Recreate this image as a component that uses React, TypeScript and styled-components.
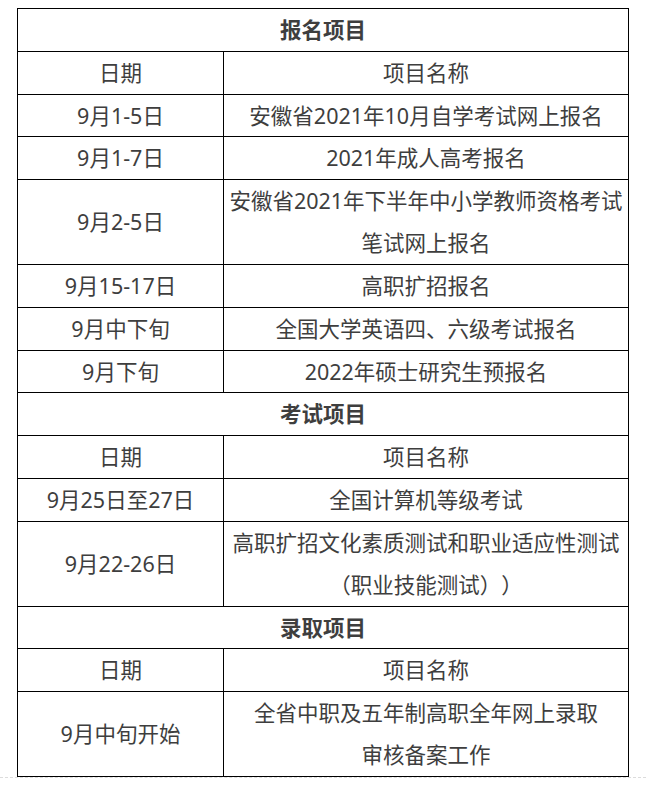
import styled, { createGlobalStyle } from "styled-components";

const GlobalStyle = createGlobalStyle`
  body {
    margin: 0;
    background: #fff;
    font-family: "Noto Sans", "Noto Sans CJK SC", sans-serif;
  }
`;

const Page = styled.div`
  width: 646px;
  box-sizing: border-box;
  padding: 8px 17px 0;
  border-bottom: 1px dashed #dcdcdc;
`;

const Table = styled.table`
  width: 612px;
  border-collapse: collapse;
  table-layout: fixed;
  color: #3e3e3e;
  font-size: 21.5px;
`;

const Cell = styled.td<{ $bold?: boolean }>`
  border: 1px solid #000;
  padding: 0;
  text-align: center;
  vertical-align: middle;
  line-height: 41.83px;
  font-weight: ${(props) => (props.$bold ? 700 : 400)};
  white-space: nowrap;
  text-spacing-trim: space-all;
`;

type Row = { date: string; items: string[] };

type Section = { title: string; rows: Row[] };

const sections: Section[] = [
  {
    title: "报名项目",
    rows: [
      { date: "9月1-5日", items: ["安徽省2021年10月自学考试网上报名"] },
      { date: "9月1-7日", items: ["2021年成人高考报名"] },
      {
        date: "9月2-5日",
        items: ["安徽省2021年下半年中小学教师资格考试", "笔试网上报名"],
      },
      { date: "9月15-17日", items: ["高职扩招报名"] },
      { date: "9月中下旬", items: ["全国大学英语四、六级考试报名"] },
      { date: "9月下旬", items: ["2022年硕士研究生预报名"] },
    ],
  },
  {
    title: "考试项目",
    rows: [
      { date: "9月25日至27日", items: ["全国计算机等级考试"] },
      {
        date: "9月22-26日",
        items: ["高职扩招文化素质测试和职业适应性测试", "（职业技能测试））"],
      },
    ],
  },
  {
    title: "录取项目",
    rows: [
      {
        date: "9月中旬开始",
        items: ["全省中职及五年制高职全年网上录取", "审核备案工作"],
      },
    ],
  },
];

const App = () => {
  return (
    <Page>
      <GlobalStyle />
      <Table>
        <colgroup>
          <col style={{ width: 206 }} />
          <col />
        </colgroup>
        <tbody>
          {sections.map((section) => [
            <tr key={section.title}>
              <Cell colSpan={2} $bold>
                {section.title}
              </Cell>
            </tr>,
            <tr key={section.title + "-head"}>
              <Cell>日期</Cell>
              <Cell>项目名称</Cell>
            </tr>,
            ...section.rows.map((row) => (
              <tr key={row.date}>
                <Cell>{row.date}</Cell>
                <Cell>
                  {row.items.map((item, i) => (
                    <span key={item}>
                      {i > 0 && <br />}
                      {item}
                    </span>
                  ))}
                </Cell>
              </tr>
            )),
          ])}
        </tbody>
      </Table>
    </Page>
  );
};

export default App;
